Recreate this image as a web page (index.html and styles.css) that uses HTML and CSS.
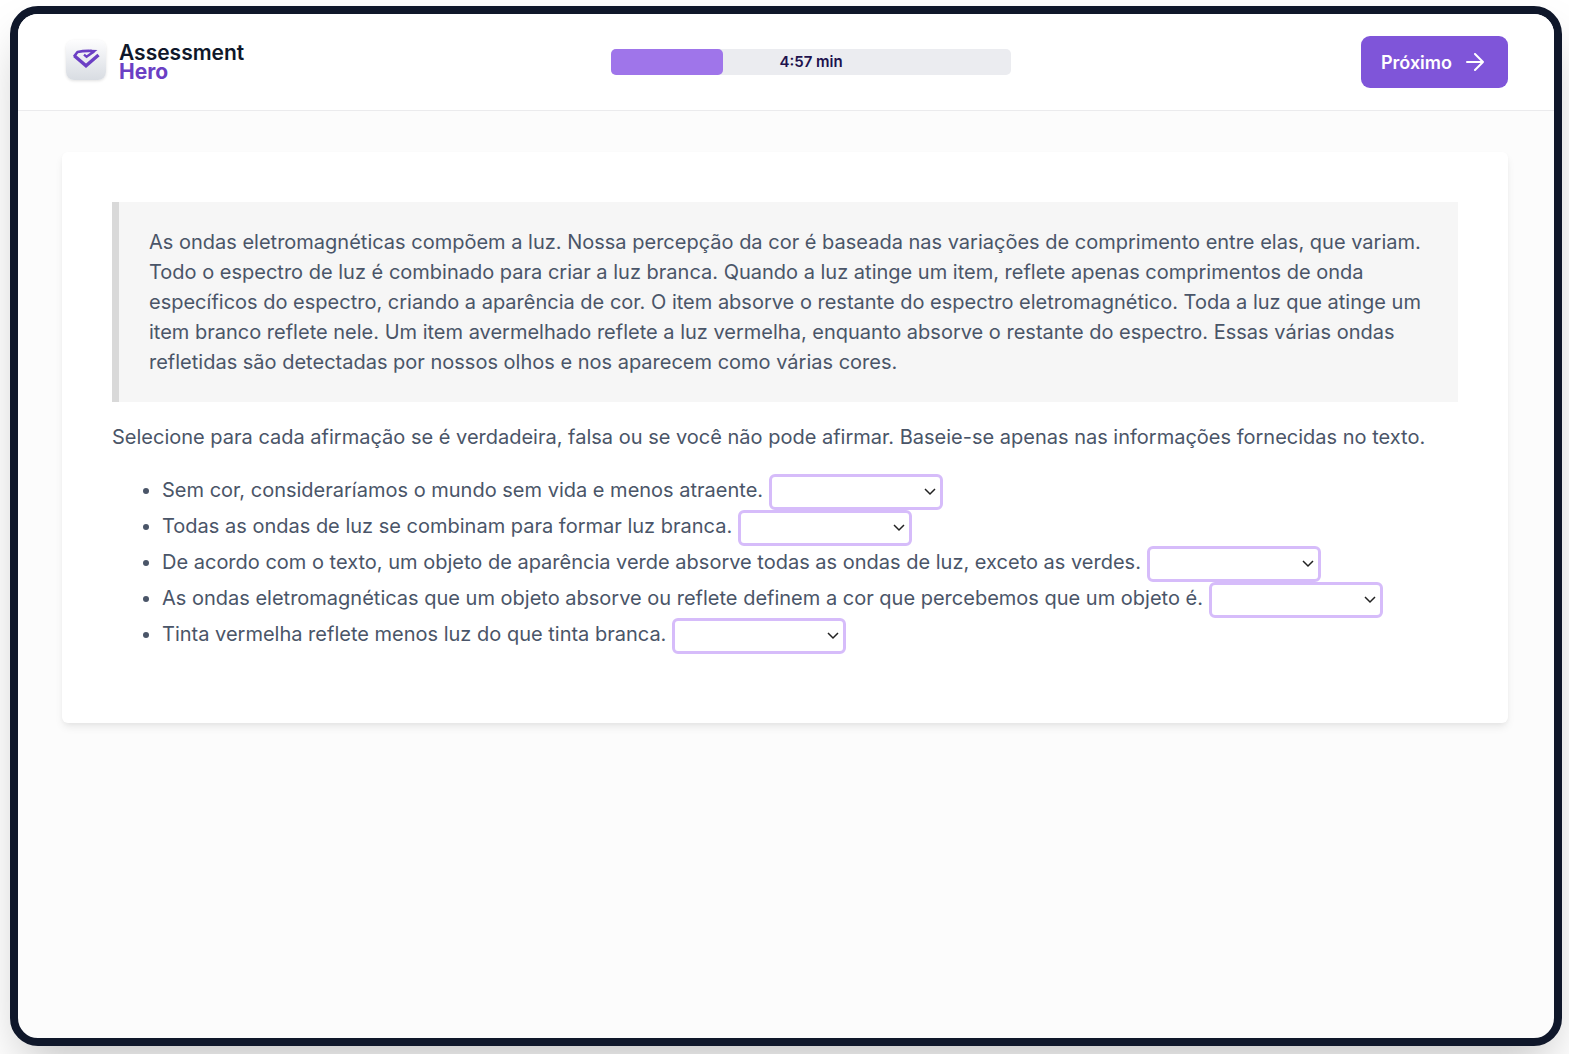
FILE: index.html
```html
<!DOCTYPE html>
<html lang="pt-BR">
<head>
    <meta charset="UTF-8">
    <meta name="viewport" content="width=device-width, initial-scale=1">
    <title>Assessment Hero</title>
    <link rel="stylesheet" href="styles.css">
</head>
<body>
<div class="frame">
    <header class="header">
        <a class="logo" href="#">
            <span class="logo-icon">
                <svg viewBox="0 0 28 20" width="28" height="20" fill="none" stroke="#6b3fc4">
                    <path stroke-width="3.4" d="M26.500 6 L14 16.800 L2.300 6.700"/>
                    <path stroke-width="2.600" stroke-linejoin="round" d="M2 7.500 L5.500 3 Q12 1.600 20 2"/>
                    <path stroke-width="2.400" d="M12 5.600 L14.600 7.800 L22 2.500"/>
                    <path fill="#6b3fc4" stroke="none" d="M18 0.700 L25.500 1 L21 4.400 L18 3.300 Z"/>
                </svg>
            </span>
            <span class="logo-text">Assessment<strong>Hero</strong></span>
        </a>
        <div class="timer">
            <div class="timer-bar" style="width: 28%"></div>
            <span class="timer-text">4:57 min</span>
        </div>
        <button class="next" type="button">
            Próximo
            <svg viewBox="0 0 18 18" width="18" height="18" fill="none" stroke="#fff" stroke-width="2" stroke-linecap="round" stroke-linejoin="round">
                <path d="M1 9h16M9 1l8 8-8 8"/>
            </svg>
        </button>
    </header>
    <main class="content">
        <div class="card">
            <blockquote class="passage">As ondas eletromagnéticas compõem a luz. Nossa percepção da cor é baseada nas variações de comprimento entre elas, que variam. Todo o espectro de luz é combinado para criar a luz branca. Quando a luz atinge um item, reflete apenas comprimentos de onda específicos do espectro, criando a aparência de cor. O item absorve o restante do espectro eletromagnético. Toda a luz que atinge um item branco reflete nele. Um item avermelhado reflete a luz vermelha, enquanto absorve o restante do espectro. Essas várias ondas refletidas são detectadas por nossos olhos e nos aparecem como várias cores.</blockquote>
            <p class="question">Selecione para cada afirmação se é verdadeira, falsa ou se você não pode afirmar. Baseie-se apenas nas informações fornecidas no texto.</p>
            <ul class="statements">
                <li><label for="s1">Sem cor, consideraríamos o mundo sem vida e menos atraente.</label> <select class="answer" id="s1"><option></option></select></li>
                <li><label for="s2">Todas as ondas de luz se combinam para formar luz branca.</label> <select class="answer" id="s2"><option></option></select></li>
                <li><label for="s3">De acordo com o texto, um objeto de aparência verde absorve todas as ondas de luz, exceto as verdes.</label> <select class="answer" id="s3"><option></option></select></li>
                <li><label for="s4">As ondas eletromagnéticas que um objeto absorve ou reflete definem a cor que percebemos que um objeto é.</label> <select class="answer" id="s4"><option></option></select></li>
                <li><label for="s5">Tinta vermelha reflete menos luz do que tinta branca.</label> <select class="answer" id="s5"><option></option></select></li>
            </ul>
        </div>
    </main>
</div>
</body>
</html>
```
FILE: styles.css
```css
* {
    margin: 0;
    padding: 0;
    box-sizing: border-box;
}
body {
    min-height: 100vh;
    padding: 6px 7px 8px 10px;
    display: flex;
    background-color: #fff;
    color: #4a5568;
    font-family: Inter, "Liberation Sans", sans-serif;
    font-size: 20px;
    line-height: 30px;
    overflow: hidden;
}
.frame {
    flex: 1;
    border: 8px solid #0f172a;
    border-radius: 28px;
    background-color: #fcfcfc;
    box-shadow: 0 25px 50px -12px rgba(0, 0, 0, 0.25);
    overflow: hidden;
}
.header {
    display: flex;
    justify-content: space-between;
    align-items: center;
    height: 97px;
    padding: 0 46px 0 48px;
    background-color: #fff;
    border-bottom: 1px solid #ebebed;
}
.logo {
    display: flex;
    align-items: center;
    gap: 13px;
    padding-right: 17px;
    color: #0f172a;
    text-decoration: none;
}
.logo-icon {
    display: flex;
    align-items: center;
    justify-content: center;
    width: 40px;
    height: 40px;
    margin-bottom: 4px;
    padding-bottom: 2px;
    border-radius: 8px;
    background: linear-gradient(#fdfdfe, #d8dce2);
    box-shadow: 0 1px 3px rgba(0, 0, 0, 0.12);
}
.logo-text {
    font-size: 21px;
    font-weight: 600;
    line-height: 19px;
}
.logo-text strong {
    display: block;
    font-weight: 700;
    color: #6b3fc4;
}
.timer {
    position: relative;
    width: 400px;
    height: 26px;
    border-radius: 5px;
    background-color: #ebecf0;
}
.timer-bar {
    height: 26px;
    border-radius: 5px;
    background-color: #9f75ea;
}
.timer-text {
    position: absolute;
    top: 0;
    left: 0;
    width: 100%;
    font-size: 15px;
    font-weight: 600;
    line-height: 26px;
    text-align: center;
    color: #20124d;
}
.next {
    display: flex;
    align-items: center;
    gap: 14px;
    height: 52px;
    padding: 0 24px 0 20px;
    border: none;
    border-radius: 9px;
    background-color: #7f55d9;
    color: #fff;
    font-family: inherit;
    font-size: 18px;
    font-weight: 600;
    cursor: pointer;
}
.content {
    padding: 41px 46px 40px 44px;
}
.card {
    padding: 50px 50px 71px;
    border-radius: 6px;
    background-color: #fff;
    box-shadow: 0 5px 8px -1px rgba(0, 0, 0, 0.08), 0 2px 5px -1px rgba(0, 0, 0, 0.04);
}
.passage {
    padding: 25px 30px;
    border-left: 7px solid #d9d9d9;
    background-color: #f6f6f6;
}
.question {
    margin: 20px 0;
}
.statements {
    padding-left: 50px;
}
.statements li {
    height: 36px;
    line-height: 36px;
}
.answer {
    appearance: none;
    width: 174px;
    height: 36px;
    border: 3px solid #d6bcfa;
    border-radius: 6px;
    vertical-align: middle;
    background: #fff url("data:image/svg+xml,%3Csvg xmlns='http://www.w3.org/2000/svg' width='12' height='8' fill='none' stroke='%23222' stroke-width='1.5'%3E%3Cpath d='M1 1l5 5 5-5'/%3E%3C/svg%3E") no-repeat right 4px center;
    font: inherit;
}
```
